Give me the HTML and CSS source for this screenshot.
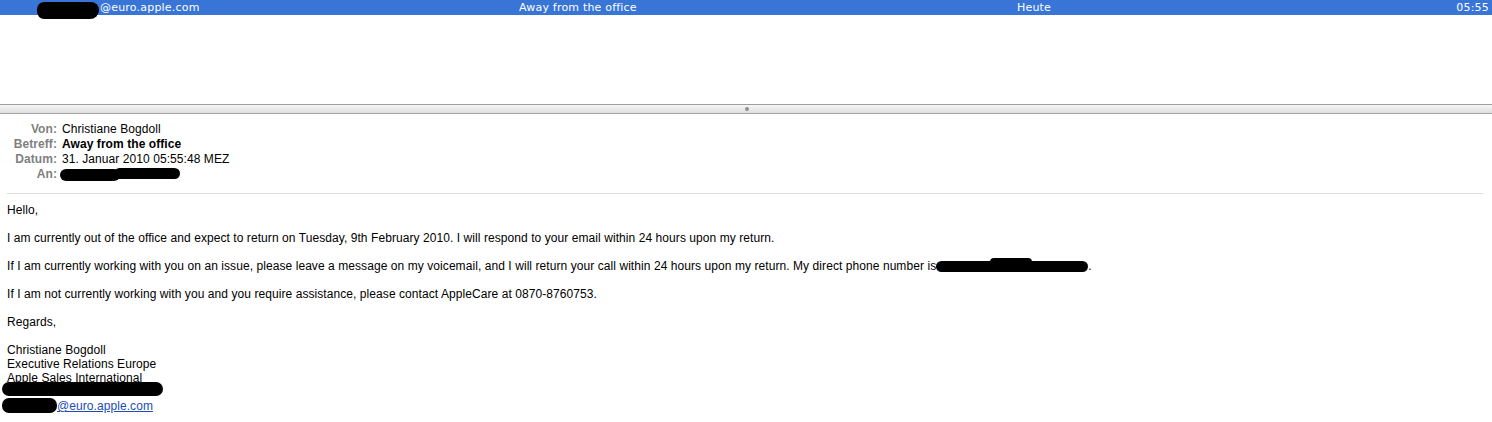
FILE: index.html
```html
<!DOCTYPE html>
<html>
<head>
<meta charset="utf-8">
<link rel="stylesheet" href="styles.css">
</head>
<body>
<div class="topbar">
  <div class="col from"><span class="redact r-top"></span>@euro.apple.com</div>
  <div class="col subj">Away from the office</div>
  <div class="col date">Heute</div>
  <div class="col time">05:55</div>
</div>
<div class="listarea"></div>
<div class="splitter"><span class="knob"></span></div>
<div class="headers">
  <div class="lbl">Von:</div><div class="val">Christiane Bogdoll</div>
  <div class="lbl">Betreff:</div><div class="val bold">Away from the office</div>
  <div class="lbl">Datum:</div><div class="val">31. Januar 2010 05:55:48 MEZ</div>
  <div class="lbl">An:</div><div class="val"><span class="redact r-an1"></span><span class="redact r-an2"></span></div>
</div>
<hr class="sep">
<div class="body">
  <p>Hello,</p>
  <p>I am currently out of the office and expect to return on Tuesday, 9th February 2010. I will respond to your email within 24 hours upon my return.</p>
  <p>If I am currently working with you on an issue, please leave a message on my voicemail, and I will return your call within 24 hours upon my return. My direct phone number is<span class="redact r-phone"><span class="hump"></span></span>.</p>
  <p>If I am not currently working with you and you require assistance, please contact AppleCare at 0870-8760753.</p>
  <p>Regards,</p>
  <p class="sig">Christiane Bogdoll<br>Executive Relations Europe<br>Apple Sales International<br><span class="redact r-sig1"></span><br><span class="redact r-sig2"></span><a href="#">@euro.apple.com</a></p>
</div>
</body>
</html>
```
FILE: styles.css
```css
html, body {
  margin: 0;
  padding: 0;
  background: #ffffff;
}
body {
  font-family: "Liberation Sans", Arial, sans-serif;
  font-size: 12px;
  letter-spacing: 0.07px;
  color: #000;
}
.topbar {
  height: 15px;
  background: #3875d7;
  color: #ffffff;
  font-family: "DejaVu Sans", sans-serif;
  font-size: 11px;
  letter-spacing: 0.2px;
  line-height: 15px;
  display: grid;
  grid-template-columns: 519px 498px 1fr auto;
  padding-right: 3px;
  white-space: nowrap;
}
.col.from {
  padding-left: 37px;
  display: flex;
  align-items: flex-start;
}
.redact {
  display: inline-block;
  background: #000;
  position: relative;
}
.r-top {
  width: 62px;
  height: 17px;
  border-radius: 8px 9px 10px 8px;
  margin-top: 2px;
  margin-right: 1px;
}
.listarea {
  height: 89px;
}
.splitter {
  height: 8px;
  border-top: 1px solid #9e9e9e;
  border-bottom: 1px solid #a5a5a5;
  background: linear-gradient(#f6f6f6, #dedede);
  display: flex;
  justify-content: center;
  align-items: center;
}
.knob {
  width: 4px;
  height: 4px;
  border-radius: 50%;
  background: #8f8f8f;
  margin-left: 2px;
}
.headers {
  display: grid;
  grid-template-columns: 57px 1fr;
  column-gap: 5px;
  padding-top: 8px;
  line-height: 15px;
}
.lbl {
  text-align: right;
  font-weight: bold;
  color: #7f7f7f;
}
.bold {
  font-weight: bold;
}
.r-an1 {
  width: 60px;
  height: 12px;
  border-radius: 6px;
  vertical-align: -3px;
  margin-left: -2px;
}
.r-an2 {
  width: 66px;
  height: 11px;
  border-radius: 6px;
  margin-left: -6px;
  vertical-align: -1px;
}
.sep {
  border: 0;
  border-top: 1px solid #dcdcdc;
  margin: 11px 9px 0 7px;
  height: 0;
}
.body {
  padding: 9px 7px 0 7px;
  line-height: 14px;
}
.body p {
  margin: 0 0 14px 0;
  white-space: nowrap;
}
.r-phone {
  width: 152px;
  height: 11px;
  border-radius: 6px;
  vertical-align: -2px;
}
.hump {
  position: absolute;
  left: 54px;
  top: -3px;
  width: 42px;
  height: 8px;
  border-radius: 6px;
  background: #000;
}
.sig .r-sig1 {
  width: 161px;
  height: 14px;
  border-radius: 7px;
  margin-left: -5px;
  top: -3px;
  vertical-align: top;
}
.sig .r-sig2 {
  width: 55px;
  height: 15px;
  border-radius: 7px;
  margin-left: -5px;
  vertical-align: top;
  top: -1px;
}
.sig a {
  color: #1c4db4;
  text-decoration: underline;
}
```
